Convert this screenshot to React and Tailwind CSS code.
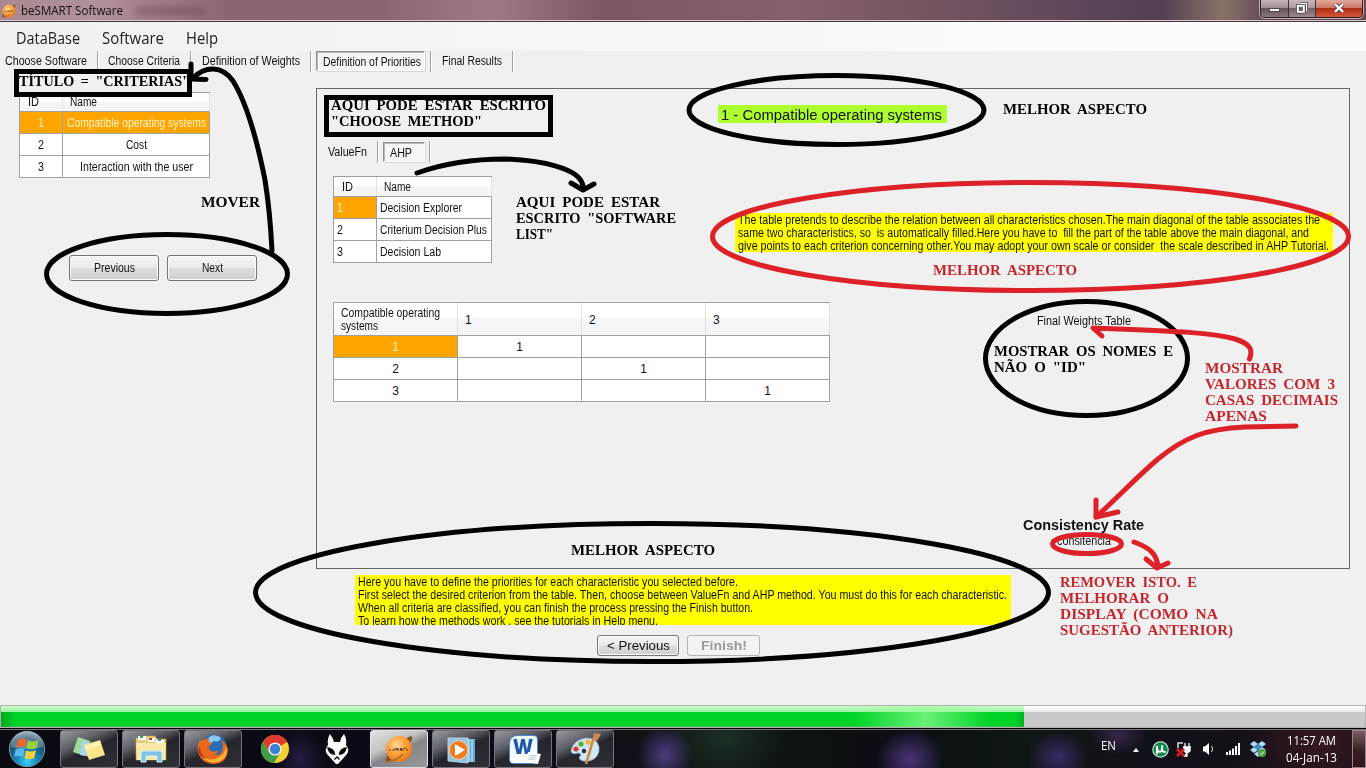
import React, { useLayoutEffect, useRef } from "react";

/* Single line of text condensed or widened to fill a given width. */
function Fit({ w, children, className = "" }) {
  const inner = useRef(null);
  useLayoutEffect(() => {
    const el = inner.current;
    el.style.transform = "none";
    const natural = el.getBoundingClientRect().width;
    el.style.transform = "scaleX(" + w / natural + ")";
  }, [w, children]);
  return (
    <span className={"block shrink-0 whitespace-pre " + className} style={{ width: w }}>
      <span ref={inner} className="inline-block origin-left">{children}</span>
    </span>
  );
}

function BeSmartIcon({ className }) {
  return (
    <svg viewBox="0 0 32 32" className={className}>
      <ellipse cx="16" cy="16" rx="18" ry="4" transform="rotate(-43 16 16)" fill="#8a5020" />
      <circle cx="16" cy="16" r="13" fill="url(#orangeBall)" />
      <path d="M3 29C12 28 18 24 20 21" stroke="#b06a20" strokeWidth="1.6" fill="none" />
      <path d="M6 17h2m2-1v2m2-3v3m1-3l1 2 1-2v3m2 0l1-3 1 3m1-3v3m1-3h2m0 1h1v2" stroke="#5a3a1a" strokeWidth="1" fill="none" />
      <defs>
        <radialGradient id="orangeBall" cx=".4" cy=".35" r=".7">
          <stop offset="0" stopColor="#ffd9a0" /><stop offset=".5" stopColor="#ffa23a" /><stop offset="1" stopColor="#e0761a" />
        </radialGradient>
      </defs>
    </svg>
  );
}

function TitleBar() {
  return (
    <header className="flex h-[22px] shrink-0 justify-between border-b border-[#4a3842] bg-[linear-gradient(90deg,#a98890_0%,#b2929a_7%,#8c646f_17%,#8d6570_28%,#a07983_36%,#7c5865_44%,#84606c_58%,#6d4f5f_72%,#523f53_85%,#8a7268_89.5%,#5c4656_93%,#6b4a50_100%)] shadow-[inset_0_-1px_0_#d9c6ca]">
      <div className="flex items-center gap-[4px] pl-px">
        <BeSmartIcon className="h-4 w-4" />
        <Fit w={102} className="font-['Open_Sans'] text-[12px] leading-5">beSMART Software</Fit>
        <div className="ml-2 h-2 w-[70px] rounded-full bg-[#5d3f48] opacity-40 blur-[3px]" />
      </div>
      <div className="mr-[3px] flex h-[18px] w-[103px] overflow-hidden rounded-b-[5px] border border-t-0 border-[#2f2227] shadow-[0_0_0_1px_#c3aab0]">
        <div className="flex w-[28px] items-end justify-center border-r border-[#3f3036] bg-[linear-gradient(#c3b3b8_0%,#a08e95_48%,#67535e_50%,#8a7580_100%)] pb-[5px]">
          <div className="h-[4px] w-[11px] border border-[#55454c] bg-white" />
        </div>
        <div className="flex w-[27px] items-center justify-center border-r border-[#3f3036] bg-[linear-gradient(#c8babe_0%,#a9989e_48%,#75616b_50%,#9c8990_100%)]">
          <svg viewBox="0 0 12 12" className="mb-[1px] h-3 w-3">
            <path d="M4 1.5h6.5V9" stroke="#46393f" strokeWidth="3" fill="none" />
            <path d="M4 1.5h6.5V9" stroke="#fff" strokeWidth="1.4" fill="none" />
            <rect x="1.8" y="3.8" width="6" height="6" stroke="#46393f" strokeWidth="3.4" fill="none" />
            <rect x="1.8" y="3.8" width="6" height="6" stroke="#fff" strokeWidth="2" fill="none" />
          </svg>
        </div>
        <div className="flex flex-1 items-center justify-center bg-[linear-gradient(#e3aa9d_0%,#cd7462_48%,#b02d15_50%,#d4573a_100%)]">
          <svg viewBox="0 0 12 10" className="mb-[2px] h-[10px] w-3">
            <path d="M2 1.2L10 8.8M10 1.2L2 8.8" stroke="#5a3030" strokeWidth="4" />
            <path d="M2 1.2L10 8.8M10 1.2L2 8.8" stroke="#fff" strokeWidth="2.5" />
          </svg>
        </div>
      </div>
    </header>
  );
}

function MenuBar() {
  return (
    <nav className="flex h-[29px] shrink-0 items-center gap-[22px] bg-[linear-gradient(90deg,#f0f0f0,#fcfcfc_85%)] pl-4 pt-[2px] font-['Open_Sans'] text-[16px] leading-6 text-[#222]">
      <Fit w={64}>DataBase</Fit>
      <Fit w={62}>Software</Fit>
      <Fit w={32}>Help</Fit>
    </nav>
  );
}

function Sep() {
  return <div className="h-full w-[2px] shrink-0 border-l border-r border-l-[#a0a0a0] border-r-white" />;
}

const pressed =
  "flex shrink-0 items-center border border-[#8f8f8f] border-b-white border-r-white bg-[#f6f6f6] shadow-[inset_1px_1px_0_#b8b8b8,1px_1px_0_#d8d8d8]";

function TabStrip() {
  return (
    <div className="flex h-[21px] shrink-0 items-center">
      <div className="flex w-[97px] shrink-0 items-center pl-[5px] pb-[2px]"><Fit w={82}>Choose Software</Fit></div>
      <Sep />
      <div className="flex w-[91px] shrink-0 items-center pl-[9px] pb-[2px]"><Fit w={72}>Choose Criteria</Fit></div>
      <Sep />
      <div className="flex w-[118px] shrink-0 items-center pl-[10px] pb-[2px]"><Fit w={98}>Definition of Weights</Fit></div>
      <Sep />
      <div className="flex h-full w-[118px] shrink-0 pl-[4px]">
        <div className={pressed + " h-[20px] w-[109px] pl-[6px] pt-[1px]"}><Fit w={98}>Definition of Priorities</Fit></div>
      </div>
      <Sep />
      <div className="flex w-[80px] shrink-0 items-center pl-[10px] pb-[2px]"><Fit w={60}>Final Results</Fit></div>
      <Sep />
    </div>
  );
}

const headFill = "bg-[linear-gradient(#ffffff_45%,#f5f6f8_50%,#f3f4f6)]";
const line = "border-[#a0a0a0]";

function CriteriaTable() {
  const rows = [["1", "Compatible operating systems", 139], ["2", "Cost", 21], ["3", "Interaction with the user", 113]];
  return (
    <div className={"w-[191px] border-l border-t " + line}>
      <div className={"flex h-[19px] items-center border-b border-r border-r-[#e2e2e2] border-b-[#a0a0a0] " + headFill}>
        <div className="flex w-[43px] border-r border-[#e2e2e2] pl-[8px]"><Fit w={11}>ID</Fit></div>
        <div className="pl-[7px]"><Fit w={27}>Name</Fit></div>
      </div>
      {rows.map(([id, name, w], i) => (
        <div key={id} className={"flex h-[22px] border-b " + line + (i === 0 ? " bg-[#ffa500] text-[#fff3c8]" : " bg-white")}>
          <div className={"flex w-[43px] items-center justify-center border-r " + line}><Fit w={6}>{id}</Fit></div>
          <div className={"flex flex-1 items-center justify-center border-r " + line}><Fit w={w}>{name}</Fit></div>
        </div>
      ))}
    </div>
  );
}

function SoftwareTable() {
  const rows = [["1", "Decision Explorer", 82], ["2", "Criterium Decision Plus", 107], ["3", "Decision Lab", 61]];
  return (
    <div className={"w-[159px] border-l border-t " + line}>
      <div className={"flex h-[20px] items-center border-b border-r border-r-[#e2e2e2] border-b-[#a0a0a0] " + headFill}>
        <div className="flex h-full w-[43px] items-center border-r border-[#e2e2e2] pl-[8px]"><Fit w={11}>ID</Fit></div>
        <div className="pl-[7px]"><Fit w={27}>Name</Fit></div>
      </div>
      {rows.map(([id, name, w], i) => (
        <div key={id} className={"flex h-[22px] border-b bg-white " + line}>
          <div className={"flex w-[43px] items-center border-r pl-[3px] " + line + (i === 0 ? " bg-[#ffa500] text-[#fff3c8]" : "")}><Fit w={6}>{id}</Fit></div>
          <div className={"flex flex-1 items-center border-r pl-[3px] " + line}><Fit w={w}>{name}</Fit></div>
        </div>
      ))}
    </div>
  );
}

function PairTable() {
  return (
    <div className={"w-[497px] self-start border-l border-t " + line}>
      <div className={"flex h-[33px] border-b " + line + " " + headFill}>
        <div className="flex w-[124px] flex-col justify-center border-r border-[#e2e2e2] pl-[7px] pt-[2px] leading-[13px]">
          <Fit w={99}>Compatible operating</Fit>
          <Fit w={37}>systems</Fit>
        </div>
        {["1", "2", "3"].map((n) => (
          <div key={n} className="flex w-[124px] items-center border-r border-[#e2e2e2] pl-[7px] pt-[2px]">{n}</div>
        ))}
      </div>
      {[0, 1, 2].map((r) => (
        <div key={r} className={"flex h-[22px] border-b bg-white " + line}>
          <div className={"flex w-[124px] items-center justify-center border-r " + line + (r === 0 ? " bg-[#ffa500] text-[#fff3c8]" : "")}>{r + 1}</div>
          {[0, 1, 2].map((c) => (
            <div key={c} className={"flex w-[124px] items-center justify-center border-r " + line}>{c === r ? "1" : ""}</div>
          ))}
        </div>
      ))}
    </div>
  );
}

const button =
  "flex items-center justify-center rounded-[3px] border border-[#757575] bg-[linear-gradient(#f4f4f4_0%,#ebebeb_48%,#dcdcdc_52%,#cfcfcf_100%)] shadow-[inset_0_0_0_1px_#fafafa]";

function LeftPane() {
  return (
    <aside className="flex w-[316px] shrink-0 flex-col">
      <div className="pl-[19px] pt-[20px]"><CriteriaTable /></div>
      <div className="mt-[77px] flex gap-2 pl-[69px]">
        <button className={button + " h-[26px] w-[90px]"}><Fit w={41}>Previous</Fit></button>
        <button className={button + " h-[26px] w-[90px]"}><Fit w={21}>Next</Fit></button>
      </div>
    </aside>
  );
}

function Panel() {
  return (
    <section className="flex h-[481px] w-[1034px] flex-col border border-[#666]">
      <div className="flex h-[213px]">
        <div className="w-[401px] shrink-0">
          <div className="mt-[52px] flex h-[22px] items-center pl-[11px]">
            <div className="w-[49px]"><Fit w={39}>ValueFn</Fit></div>
            <Sep />
            <div className={pressed + " ml-[4px] mr-[4px] h-[20px] w-[42px] pl-[6px] pt-[1px]"}><Fit w={22}>AHP</Fit></div>
            <Sep />
          </div>
          <div className="pl-[16px] pt-[13px]"><SoftwareTable /></div>
        </div>
        <div className="flex-1">
          <div className="mt-[16px] flex h-[18px] w-[229px] items-center bg-[#adff2f] pl-[3px] pt-px text-[15.5px]"><Fit w={221}>1 - Compatible operating systems</Fit></div>
          <div className="ml-[17px] mt-[90px] flex h-[39px] w-[598px] flex-col items-start bg-[#ffff00] pl-[3px] pt-px leading-[13px]">
            <Fit w={582}>The table pretends to describe the relation between all characteristics chosen.The main diagonal of the table associates the</Fit>
            <Fit w={571}>same two characteristics, so  is automatically filled.Here you have to  fill the part of the table above the main diagonal, and</Fit>
            <Fit w={591}>give points to each criterion concerning other.You may adopt your own scale or consider  the scale described in AHP Tutorial.</Fit>
          </div>
        </div>
      </div>
      <div className="flex flex-1 pl-[16px]">
        <PairTable />
        <div className="flex flex-1 flex-col pl-[193px] pt-[12px]">
          <Fit w={94} className="ml-[14px]">Final Weights Table</Fit>
          <Fit w={121} className="mt-[189px] text-[14.5px] font-bold leading-[17px]">Consistency Rate</Fit>
          <Fit w={54} className="ml-[34px]">consitencia</Fit>
        </div>
      </div>
    </section>
  );
}

function RightPane() {
  return (
    <main className="flex flex-1 flex-col pt-[16px]">
      <Panel />
      <div className="ml-[39px] mt-[6px] flex h-[50px] w-[656px] flex-col items-start overflow-hidden bg-[#ffff00] pl-[3px] pt-px leading-[13px]">
        <Fit w={380}>Here you have to define the priorities for each characteristic you selected before.</Fit>
        <Fit w={649}>First select the desired criterion from the table. Then, choose between ValueFn and AHP method. You must do this for each characteristic.</Fit>
        <Fit w={395}>When all criteria are classified, you can finish the process pressing the Finish button.</Fit>
        <Fit w={300}>To learn how the methods work , see the tutorials in Help menu.</Fit>
      </div>
      <div className="ml-[281px] mt-[10px] flex gap-2 text-[13.5px]">
        <button className={button + " h-[21px] w-[82px]"}><Fit w={63}>&lt; Previous</Fit></button>
        <button className="flex h-[21px] w-[73px] items-center justify-center rounded-[3px] border border-[#b4b4b4] bg-[#f3f3f3] font-bold text-[#9a9a9a]"><Fit w={46}>Finish!</Fit></button>
      </div>
    </main>
  );
}

function Progress() {
  return (
    <div className="flex h-[23px] shrink-0 border border-[#b2b2b2] bg-[linear-gradient(#ffffff_0,#e8e8e8_6px,#c9c9c9_6px,#c9c9c9_100%)]">
      <div className="relative h-full w-[1023px] bg-[linear-gradient(#caffca_0,#9cf0a0_6px,#00d328_6px,#00d328_19px,#3bbf50_21px)]">
        <div className="absolute right-0 top-0 h-full w-[170px] bg-[linear-gradient(90deg,transparent,rgba(150,255,150,.7)_42%,transparent_80%)]" />
        <div className="absolute left-0 top-[6px] h-[15px] w-[16px] bg-[linear-gradient(90deg,rgba(0,130,20,.5),transparent)]" />
        <div className="absolute right-0 top-[6px] h-[15px] w-[10px] bg-[linear-gradient(270deg,rgba(0,130,20,.4),transparent)]" />
      </div>
    </div>
  );
}

function StartOrb() {
  return (
    <svg viewBox="0 0 40 40" className="h-[38px] w-[38px]">
      <defs>
        <radialGradient id="orb" cx=".5" cy=".85" r=".85">
          <stop offset="0" stopColor="#35d5ff" /><stop offset=".4" stopColor="#1779a8" /><stop offset=".75" stopColor="#1d4763" /><stop offset="1" stopColor="#7e97a6" />
        </radialGradient>
      </defs>
      <circle cx="20" cy="20" r="18.5" fill="url(#orb)" stroke="#7fa6b8" strokeWidth="1" />
      <path d="M3 18A17 17 0 0 1 37 18Q20 22 3 18" fill="#fff" opacity=".28" />
      <path d="M10.500 10.500Q15 7.500 19.500 10.500L18 18.500Q13.500 16 8.500 18.500Z" fill="#f0672c" />
      <path d="M21 11Q26 13.500 32 10.500L30 19Q25 21.500 19.500 19Z" fill="#9bd13b" />
      <path d="M8 20.500Q13 18 17.500 20.500L16 28.500Q11.500 26 6.500 28.500Z" fill="#5cb8f0" />
      <path d="M19 21.500Q24 24 29.500 21L27.500 29.500Q22 32 17.500 29.500Z" fill="#ffcf3d" />
    </svg>
  );
}

function NotesIcon() {
  return (
    <svg viewBox="0 0 32 32" className="h-8 w-8">
      <path d="M5 4L17 8L12 23L0 19Z" fill="#9ddb9a" /><path d="M9 8L21 10L18 24L7 22Z" fill="#a8d4ee" />
      <path d="M11 12L27 7L32 22L16 27Z" fill="#f8e58c" /><path d="M12 13L27 8L28 12L13 17Z" fill="#fff3b4" />
    </svg>
  );
}
function FolderIcon() {
  return (
    <svg viewBox="0 0 32 32" className="h-8 w-8">
      <path d="M1 5H8L10 3H20L22 6H31V27H1Z" fill="#e9cc79" stroke="#c5a24c" strokeWidth=".6" />
      <path d="M3 3h8v4H3zM13 5h7v4h-7zM21 7h8v3h-8z" fill="#fff" /><path d="M5 3h3v2H5z" fill="#3aa23a" /><path d="M14 5h3v2h-3z" fill="#c33" /><path d="M23 6h3v2h-3z" fill="#38c" />
      <path d="M1 10H31L30 27H2Z" fill="#f9e9a9" />
      <path d="M6 29V20Q6 18 8 18H25Q27 18 27 20V29H22V23H11V29Z" fill="#7cc3e8" stroke="#d4f0ff" strokeWidth="1" />
    </svg>
  );
}
function FirefoxIcon() {
  return (
    <svg viewBox="0 0 32 32" className="h-8 w-8">
      <circle cx="17" cy="14" r="12.500" fill="#2a6db5" />
      <path d="M12 4Q18 0 24 5Q22 10 17 8Q13 12 10 9Z" fill="#8cc8ee" />
      <path d="M3 7Q5 8 7 7Q9 5 12 5Q11 7 12 9L15 10Q15 12 12 13Q11 16 14 18Q18 20 21 17Q21 21 17 22Q25 23 26 15Q26 10 24 7Q31 11 31 18Q29 31 16 31Q3 30 1 18Q0 12 3 7Z" fill="#e8681c" />
      <path d="M29 13Q32 25 21 29Q10 31 5 23Q12 29 20 25Q28 22 29 13Z" fill="#f9b437" /><path d="M3 13Q3 22 9 25Q3 25 1 18Z" fill="#b83a12" />
    </svg>
  );
}
function ChromeIcon() {
  return (
    <svg viewBox="0 0 32 32" className="h-8 w-8">
      <circle cx="16" cy="16" r="14" fill="#f6cf34" />
      <path d="M16 16L3.900 9A14 14 0 0 1 28.100 9Z" fill="#dc3b2e" /><path d="M16 9H28.100A14 14 0 0 0 3.900 9L9.500 18Z" fill="#dc3b2e" />
      <path d="M3.900 9A14 14 0 0 0 15 30L21.500 19.500L10 19.500Z" fill="#3c9e48" />
      <circle cx="16" cy="16" r="6.600" fill="#f4f4f4" /><circle cx="16" cy="16" r="5.200" fill="#3c83d6" />
    </svg>
  );
}
function FoobarIcon() {
  return (
    <svg viewBox="0 0 32 32" className="h-8 w-8">
      <path d="M9 1Q12 5 13 9H19Q20 4 23 1Q26 6 25 12Q29 17 26 21L17 31L15 31L6 21Q3 17 7 12Q6 6 9 1Z" fill="#fff" />
      <path d="M6.500 14.500Q13 15 14 21.500Q8 22 6.500 14.500ZM25.500 14.500Q19 15 18 21.500Q24 22 25.500 14.500Z" fill="#050505" stroke="#000" strokeWidth=".6" />
      <path d="M13.500 26.500L16 24L18.500 26.500" fill="none" stroke="#000" strokeWidth="1.300" />
    </svg>
  );
}
function PlayerIcon() {
  return (
    <svg viewBox="0 0 32 32" className="h-8 w-8">
      <path d="M21 6H30V29H21Z" fill="#5da9d8" /><path d="M24 6v23M27 6v23" stroke="#dff1fb" strokeWidth="1" />
      <path d="M3 5H23V30L3 28Z" fill="#8fc4e4" stroke="#c8e4f4" strokeWidth=".8" />
      <circle cx="13.500" cy="17" r="9.300" fill="#f07a20" stroke="#ffd0a0" strokeWidth="1" /><path d="M10 11L20 17L10 23Z" fill="#fff" />
    </svg>
  );
}
function WordIcon() {
  return (
    <div className="relative h-[29px] w-[29px] rounded-sm rounded-tl-lg border border-[#4a8ad0] bg-[linear-gradient(#e9f4fd,#ffffff)]">
      <div className="flex justify-center font-['Open_Sans'] text-[21px] font-extrabold leading-[20px] text-[#1b58a8]"><Fit w={20}>W</Fit></div>
      <svg viewBox="0 0 16 12" className="absolute -bottom-px -right-1 h-3 w-4"><path d="M3 0L16 2L13 12L0 10Z" fill="#fff" /><path d="M4 3l8 1M4 5l7 1M3 7l7 1" stroke="#9ab8d8" strokeWidth=".8" /></svg>
    </div>
  );
}
function PaintIcon() {
  return (
    <svg viewBox="0 0 32 32" className="h-8 w-8">
      <path d="M2 18Q4 7 17 5Q28 5 30 14Q31 25 20 28Q12 29 10 25Q14 20 9 20Q3 22 2 18Z" fill="#cfe6f4" stroke="#91b5cc" strokeWidth=".8" />
      <circle cx="7" cy="16" r="2.600" fill="#dc3c32" /><circle cx="12" cy="11" r="2.600" fill="#4fb03c" /><circle cx="19" cy="9" r="2.600" fill="#f0b830" /><circle cx="15" cy="18" r="2.200" fill="#26313a" />
      <path d="M17 31L24 7" stroke="#d8843c" strokeWidth="2.600" /><path d="M23 7L25 0L32 1L28 8Z" fill="#c98a55" />
    </svg>
  );
}

function TaskButton({ children, active, plain }) {
  const skin = plain
    ? "border-transparent"
    : active
      ? "border-[#e0e0e0] bg-[linear-gradient(155deg,#e2e2e2_0%,#c2c2c2_38%,#85858a_55%,#99999c_100%)]"
      : "border-[#75757c] bg-[linear-gradient(155deg,#9999a0_0%,#606068_32%,#25252b_52%,#303036_100%)]";
  return <div className={"flex h-[38px] w-[58px] items-center justify-center rounded-[3px] border " + skin}>{children}</div>;
}

function Tray() {
  return (
    <div className="flex h-full items-center font-['Open_Sans'] text-white">
      <Fit w={15} className="mb-[7px] text-[12px]">EN</Fit>
      <svg viewBox="0 0 8 5" className="ml-[16px] mt-[2px] h-[4px] w-[8px]"><path d="M4 0L8 5H0Z" fill="#eee" /></svg>
      <svg viewBox="0 0 16 16" className="ml-[12px] h-[17px] w-[17px]">
        <circle cx="8" cy="8" r="7.300" fill="#18864f" stroke="#d4eedf" strokeWidth="1" />
        <path d="M4.500 12.500Q5 9 4.500 4.500M4.800 7Q5.200 10.500 8 10Q10 9.500 9.500 4M9.500 8Q10 11 13 10" fill="none" stroke="#fff" strokeWidth="1.800" />
      </svg>
      <svg viewBox="0 0 15 15" className="ml-[7px] h-[15px] w-[15px]">
        <path d="M9 1V5M13 1V5M7 5H15M8 6H14V9Q11 12 8 9ZM11 10V14H8" stroke="#fff" strokeWidth="1.300" fill="#fff" />
        <path d="M7 1H2V6" stroke="#ddd" strokeWidth="1.500" fill="none" /><path d="M1 7L8 14M8 7L1 14" stroke="#d01820" strokeWidth="3" />
      </svg>
      <svg viewBox="0 0 14 14" className="ml-[11px] h-[14px] w-[14px]"><path d="M1 4.500H3L7 1V13L3 9.500H1Z" fill="#fff" /><path d="M9.500 4Q12 7 9.500 10" stroke="#ddd" fill="none" /></svg>
      <svg viewBox="0 0 15 12" className="ml-[10px] h-[12px] w-[15px]"><path d="M0 9h2v3H0zM3 7.500h2V12H3zM6 5.500h2V12H6zM9 3h2v9H9zM12 0h2v12h-2z" fill="#fff" /></svg>
      <svg viewBox="0 0 16 16" className="ml-[9px] h-4 w-4">
        <path d="M4 0L8 3L4 6L0 3ZM12 0L16 3L12 6L8 3ZM4 6L8 9L4 12L0 9ZM12 6L16 9L12 12L8 9ZM8 10L12 13L8 16L4 13Z" fill="#a8dcfa" /><path d="M8 3L12 6L8 9L4 6Z" fill="#3c8cc8" />
        <circle cx="12" cy="12" r="4" fill="#4aa540" /><path d="M10 12L11.500 13.500L14 10.500" stroke="#fff" fill="none" />
      </svg>
      <div className="ml-[20px] flex w-[51px] flex-col items-center text-[12px] leading-[17px]">
        <Fit w={49}>11:57 AM</Fit>
        <Fit w={51}>04-Jan-13</Fit>
      </div>
      <div className="ml-[15px] h-full w-[14px] border border-[#9a8088] bg-[linear-gradient(#7e5b62,#391e24_55%,#2b151b)]" />
    </div>
  );
}

function Taskbar() {
  return (
    <footer className="flex h-[40px] shrink-0 items-end justify-between border-t border-black bg-[radial-gradient(ellipse_34px_30px_at_910px_30px,#4a3378,transparent),radial-gradient(ellipse_28px_30px_at_665px_26px,#4e3a80,transparent),radial-gradient(ellipse_30px_26px_at_1058px_28px,#382b67,transparent),radial-gradient(ellipse_24px_30px_at_300px_30px,#261c42,transparent),radial-gradient(ellipse_60px_40px_at_725px_10px,#1c3024,transparent),radial-gradient(ellipse_70px_40px_at_1320px_15px,#371820,transparent),radial-gradient(ellipse_30px_20px_at_1118px_6px,#382447,transparent),linear-gradient(90deg,#090a12,#0d0b17_40%,#101813_52%,#0b0e13_65%,#0f1715_75%,#101018_85%,#20121a)]">
      <div className="flex h-[39px] flex-1 items-center justify-between border-t border-[#777a7a]">
        <div className="flex items-center">
          <div className="w-[60px] pl-[8px]"><StartOrb /></div>
          <div className="flex gap-1">
            <TaskButton><NotesIcon /></TaskButton>
            <TaskButton><FolderIcon /></TaskButton>
            <TaskButton><FirefoxIcon /></TaskButton>
            <TaskButton plain><ChromeIcon /></TaskButton>
            <TaskButton plain><FoobarIcon /></TaskButton>
            <TaskButton active><BeSmartIcon className="h-8 w-8" /></TaskButton>
            <TaskButton><PlayerIcon /></TaskButton>
            <TaskButton><WordIcon /></TaskButton>
            <TaskButton><PaintIcon /></TaskButton>
          </div>
        </div>
        <Tray />
      </div>
    </footer>
  );
}

/* Review notes written on top of the window. */
function Note({ at, red, lines }) {
  return (
    <div className={"absolute flex flex-col items-start font-['Liberation_Serif'] text-[14px] font-bold leading-[16px] [word-spacing:3px] " + at + (red ? " text-[#c4262e]" : " text-black")}>
      {lines.map(([t, w]) => <Fit key={t} w={w}>{t}</Fit>)}
    </div>
  );
}

function Annotations() {
  return (
    <div className="pointer-events-none absolute inset-0">
      <svg viewBox="0 0 1366 768" className="absolute inset-0 h-full w-full" fill="none" strokeWidth="5" strokeLinecap="round" strokeLinejoin="round">
        <g stroke="#000">
          <rect x="16.500" y="71.500" width="173" height="23" strokeLinejoin="miter" />
          <rect x="326.500" y="97.500" width="224" height="37" strokeLinejoin="miter" />
          <ellipse cx="836.500" cy="110" rx="147.500" ry="34.500" />
          <ellipse cx="167" cy="274" rx="120.500" ry="39.500" />
          <ellipse cx="652" cy="592.500" rx="396.500" ry="69" />
          <ellipse cx="1086.500" cy="358.500" rx="101" ry="57" />
          <path d="M193 78C205 66 222 65 233 81C248 105 258 145 265 180C269 205 271 230 272 251" />
          <path d="M191 64V79L206 79.500" />
          <path d="M417 173C445 163 475 159 505 159C535 160 585 167 583 189" />
          <path d="M571 183L583 190L594 184" />
        </g>
        <g stroke="#dc2128">
          <ellipse cx="1030.500" cy="236.500" rx="318" ry="54" />
          <ellipse cx="1087" cy="544" rx="34.500" ry="9.500" />
          <path d="M1249.500 359C1253 350 1251 344 1235 339C1210 332 1170 331 1093 328L1102 336" />
          <path d="M1296 426L1245 427C1205 429 1185 437 1158 459C1140 474 1117 498 1096 517" />
          <path d="M1096 500L1096 517L1118 512" />
          <path d="M1134 542C1148 547 1157 553 1158 567" /><path d="M1146 559L1157 568L1168 563" />
        </g>
      </svg>
      <Note at="left-[19px] top-[74px]" lines={[['TÍTULO = "CRITERIAS"', 171]]} />
      <Note at="left-[201px] top-[195px]" lines={[["MOVER", 59]]} />
      <Note at="left-[331px] top-[98px]" lines={[["AQUI PODE ESTAR ESCRITO", 215], ['"CHOOSE METHOD"', 151]]} />
      <Note at="left-[516px] top-[195px]" lines={[["AQUI PODE ESTAR", 144], ['ESCRITO "SOFTWARE', 160], ['LIST"', 37]]} />
      <Note at="left-[1003px] top-[102px]" lines={[["MELHOR ASPECTO", 144]]} />
      <Note at="left-[571px] top-[543px]" lines={[["MELHOR ASPECTO", 144]]} />
      <Note at="left-[994px] top-[344px]" lines={[["MOSTRAR OS NOMES E", 179], ['NÃO O "ID"', 92]]} />
      <Note red at="left-[933px] top-[263px]" lines={[["MELHOR ASPECTO", 144]]} />
      <Note red at="left-[1205px] top-[361px]" lines={[["MOSTRAR", 78], ["VALORES COM 3", 130], ["CASAS DECIMAIS", 133], ["APENAS", 62]]} />
      <Note red at="left-[1060px] top-[575px]" lines={[["REMOVER ISTO. E", 137], ["MELHORAR O", 109], ["DISPLAY (COMO NA", 158], ["SUGESTÃO ANTERIOR)", 173]]} />
    </div>
  );
}

export default function App() {
  return (
    <div className="relative flex h-[768px] w-[1366px] flex-col overflow-hidden bg-[#f0f0f0] font-['Liberation_Sans',sans-serif] text-[12px] leading-[14px] text-[#111]">
      <TitleBar />
      <MenuBar />
      <TabStrip />
      <div className="flex h-[633px] shrink-0">
        <LeftPane />
        <RightPane />
      </div>
      <Progress />
      <Taskbar />
      <Annotations />
    </div>
  );
}
